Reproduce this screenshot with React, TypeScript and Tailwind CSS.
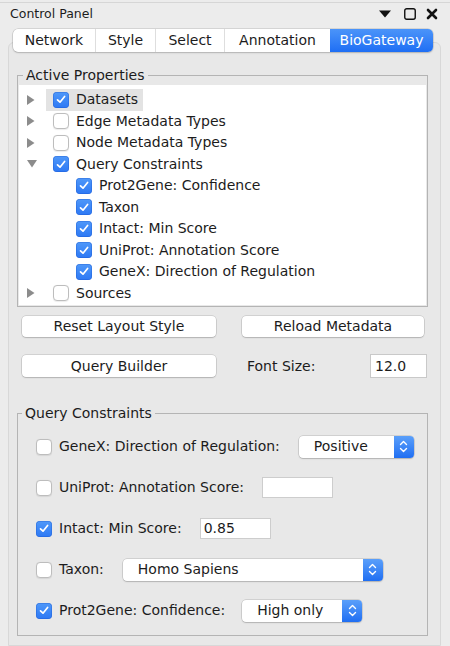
import React from "react";

const font = { fontFamily: '"DejaVu Sans", "Liberation Sans", sans-serif' };

function Check({ checked }: { checked: boolean }) {
  if (checked) {
    return (
      <span className="flex h-[16px] w-[16px] shrink-0 items-center justify-center rounded-[4px] bg-linear-to-b from-[#4f98f9] to-[#2d78f4] shadow-[inset_0_0_0_0.5px_rgba(20,80,200,0.6)]">
        <svg width="10" height="9" viewBox="0 0 10 9">
          <path d="M1.5 4.8 L4 7.2 L8.6 1.5" fill="none" stroke="#fff" strokeWidth="1.7" strokeLinecap="round" strokeLinejoin="round" />
        </svg>
      </span>
    );
  }
  return <span className="block h-[16px] w-[16px] shrink-0 rounded-[4px] border border-[#bdbdbd] bg-white shadow-[0_0.5px_1px_rgba(0,0,0,0.08)]" />;
}

function Arrow({ open }: { open?: boolean }) {
  return open ? (
    <svg width="10" height="8" viewBox="0 0 10 8">
      <path d="M0 0 H10 L5 7.5 Z" fill="#8c8c8c" />
    </svg>
  ) : (
    <svg width="8" height="10" viewBox="0 0 8 10">
      <path d="M0 0 V10 L7.5 5 Z" fill="#8c8c8c" />
    </svg>
  );
}

function Dropdown({ value, width }: { value: string; width: string }) {
  return (
    <div className={`flex h-[22px] ${width} items-stretch rounded-[4px] bg-white shadow-[0_0_0_0.5px_rgba(0,0,0,0.2),0_1px_1.5px_rgba(0,0,0,0.15)]`}>
      <span className="flex flex-1 items-center pl-[15px] text-[14px]">{value}</span>
      <span className="flex w-[20px] items-center justify-center rounded-r-[4px] bg-linear-to-b from-[#5a9ffa] to-[#1f6ef2]">
        <svg width="9" height="13" viewBox="0 0 9 13">
          <path d="M1.5 4.5 L4.5 1.5 L7.5 4.5 M1.5 8.5 L4.5 11.5 L7.5 8.5" fill="none" stroke="#fff" strokeWidth="1.4" strokeLinecap="round" strokeLinejoin="round" />
        </svg>
      </span>
    </div>
  );
}

function Button({ label, width }: { label: string; width: string }) {
  return (
    <div className={`flex h-[21px] ${width} items-center justify-center rounded-[4px] bg-white text-[14px] shadow-[0_0_0_0.5px_rgba(0,0,0,0.2),0_1px_1.5px_rgba(0,0,0,0.14)]`}>
      {label}
    </div>
  );
}

const tree = [
  { label: "Datasets", level: 0, arrow: "right", checked: true, selected: true },
  { label: "Edge Metadata Types", level: 0, arrow: "right", checked: false },
  { label: "Node Metadata Types", level: 0, arrow: "right", checked: false },
  { label: "Query Constraints", level: 0, arrow: "down", checked: true },
  { label: "Prot2Gene: Confidence", level: 1, checked: true },
  { label: "Taxon", level: 1, checked: true },
  { label: "Intact: Min Score", level: 1, checked: true },
  { label: "UniProt: Annotation Score", level: 1, checked: true },
  { label: "GeneX: Direction of Regulation", level: 1, checked: true },
  { label: "Sources", level: 0, arrow: "right", checked: false },
];

const tabs = [
  { label: "Network", w: "w-[82px]" },
  { label: "Style", w: "w-[60px]" },
  { label: "Select", w: "w-[69px]" },
  { label: "Annotation", w: "w-[106px]" },
  { label: "BioGateway", w: "w-[103px]", active: true },
];

export default function App() {
  return (
    <div className="flex h-[646px] w-[450px] flex-col overflow-hidden bg-[#ececec] text-[#1c1c1c]" style={font}>
      <div className="mt-[2px] border-t border-[#d6d6d6]" />
      {/* title bar */}
      <div className="flex h-[22px] items-center justify-between pl-[10px] pr-[12px]">
        <span className="text-[12.5px]">Control Panel</span>
        <div className="flex items-center">
          <svg width="12" height="8" viewBox="0 0 12 8">
            <path d="M0 0.5 H12 L6 7.5 Z" fill="#111" />
          </svg>
          <svg className="ml-[13px]" width="12" height="12" viewBox="0 0 12 12">
            <rect x="0.75" y="0.75" width="10.5" height="10.5" rx="2" fill="none" stroke="#111" strokeWidth="1.4" />
          </svg>
          <svg className="ml-[10px]" width="12" height="12" viewBox="0 0 12 12">
            <path d="M2 2 L10 10 M10 2 L2 10" stroke="#111" strokeWidth="2.6" strokeLinecap="round" />
          </svg>
        </div>
      </div>

      {/* tabs */}
      <div className="relative z-10 ml-[13px] mt-[4px] flex h-[23px] w-[420px] rounded-[5px] bg-white text-[14px] shadow-[0_0_0_0.5px_rgba(0,0,0,0.18),0_1px_2px_rgba(0,0,0,0.15)]">
        {tabs.map((t, i) => (
          <div
            key={t.label}
            className={`flex ${t.w} items-center justify-center ${
              t.active
                ? "rounded-r-[5px] bg-linear-to-b from-[#4b94f9] to-[#1e6ef4] text-white"
                : i > 0
                ? "border-l border-[#dedede]"
                : ""
            }`}
          >
            {t.label}
          </div>
        ))}
      </div>

      {/* panel */}
      <div className="-mt-[10px] ml-[8px] flex w-[433px] flex-1 flex-col rounded-t-[6px] border border-[#d8d8d8] bg-[#e8e8e8] pl-[8px] pt-[24px]">
        <fieldset className="w-[411px] border border-[#b4b4b4] p-px">
          <legend className="ml-[4px] px-[3px] text-[14px] leading-[17px]">Active Properties</legend>
          <div className="bg-white pb-px pt-[4px]">
            {tree.map((r) => (
              <div key={r.label} className="flex h-[21.5px] items-center text-[14px]">
                <span className={`flex h-full shrink-0 items-center pl-[8px] ${r.level ? "w-[50px]" : "w-[27px]"}`}>
                  {r.arrow ? <Arrow open={r.arrow === "down"} /> : null}
                </span>
                <span className={`flex h-full items-center gap-[7px] pl-[7px] pr-[5px] ${r.selected ? "bg-[#e3e3e3]" : ""}`}>
                  <Check checked={r.checked} />
                  {r.label}
                </span>
              </div>
            ))}
          </div>
        </fieldset>

        <div className="ml-[5px] mt-[9px] flex gap-[26px]">
          <Button label="Reset Layout Style" width="w-[194px]" />
          <Button label="Reload Metadata" width="w-[182px]" />
        </div>

        <div className="ml-[5px] mt-[17px] flex items-center">
          <div className="flex h-[22px] w-[194px] items-center justify-center rounded-[4px] bg-white text-[14px] shadow-[0_0_0_0.5px_rgba(0,0,0,0.2),0_1px_1.5px_rgba(0,0,0,0.14)]">
            Query Builder
          </div>
          <span className="ml-[31px] w-[123px] text-[14px]">Font Size:</span>
          <div className="flex h-[24px] w-[57px] items-center border border-[#c9c9c9] bg-white pl-[4px] text-[14px]">12.0</div>
        </div>

        <fieldset className="mt-[27px] w-[411px] border border-[#b4b4b4] p-0">
          <legend className="ml-[4px] px-[3px] text-[14px] leading-[17px]">Query Constraints</legend>
          <div className="pb-[4px] pl-[18px] pt-[4px] text-[14px]">
            <div className="flex h-[41px] items-center gap-[7px]">
              <Check checked={false} />
              <span>GeneX: Direction of Regulation:</span>
              <span className="ml-[12px]">
                <Dropdown value="Positive" width="w-[115px]" />
              </span>
            </div>

            <div className="flex h-[41px] items-center gap-[7px]">
              <Check checked={false} />
              <span>UniProt: Annotation Score:</span>
              <span className="ml-[11px] block h-[21px] w-[71px] border border-[#cdcdcd] bg-white" />
            </div>

            <div className="flex h-[41px] items-center gap-[7px]">
              <Check checked={true} />
              <span>Intact: Min Score:</span>
              <span className="ml-[11px] flex h-[21px] w-[71px] items-center border border-[#cdcdcd] bg-white pl-[3px]">0.85</span>
            </div>

            <div className="flex h-[41px] items-center gap-[7px]">
              <Check checked={false} />
              <span>Taxon:</span>
              <span className="ml-[12px]">
                <Dropdown value="Homo Sapiens" width="w-[260px]" />
              </span>
            </div>

            <div className="flex h-[41px] items-center gap-[7px]">
              <Check checked={true} />
              <span>Prot2Gene: Confidence:</span>
              <span className="ml-[10px]">
                <Dropdown value="High only" width="w-[120px]" />
              </span>
            </div>
          </div>
        </fieldset>
      </div>
    </div>
  );
}
